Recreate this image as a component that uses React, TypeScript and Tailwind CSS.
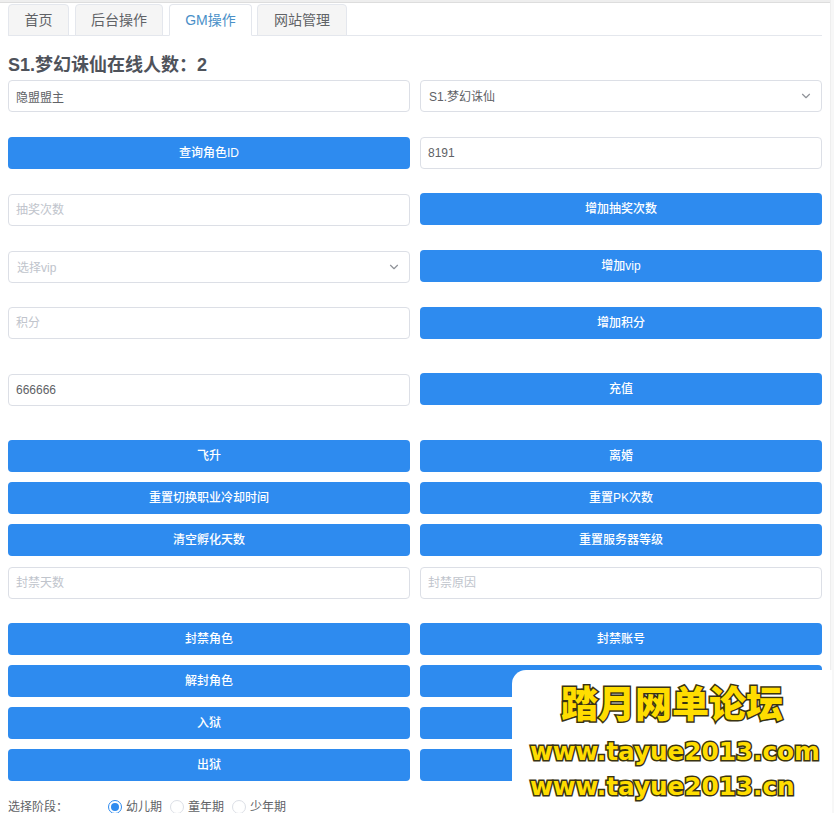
import { ChevronDown } from 'lucide-react';

const font = "[font-family:'Liberation_Sans','Noto_Sans_CJK_SC',sans-serif]";

function Field({ value, placeholder }: { value?: string; placeholder?: string }) {
  return (
    <input
      readOnly
      value={value}
      placeholder={placeholder}
      className="w-full h-8 rounded border border-[#dcdfe6] bg-white px-[7px] text-xs text-[#606266] outline-none placeholder:text-[#c0c4cc]"
    />
  );
}

function Picker({ value, placeholder }: { value?: string; placeholder?: string }) {
  return (
    <div className="w-full h-8 rounded border border-[#dcdfe6] bg-white pl-2 pr-2 flex items-center justify-between text-xs">
      <span className={`pt-px ${value ? 'text-[#606266]' : 'text-[#c0c4cc]'}`}>{value || placeholder}</span>
      <ChevronDown size={14} className="text-[#909399]" />
    </div>
  );
}

function Btn({ label }: { label?: string }) {
  return (
    <button className="w-full h-8 rounded bg-[#2e8bef] text-white text-xs font-medium flex items-center justify-center">
      {label}
    </button>
  );
}

function Radio({ label, checked }: { label: string; checked?: boolean }) {
  return (
    <span className="flex items-center gap-1">
      <span className={`w-[14px] h-[14px] rounded-full border flex items-center justify-center ${checked ? 'border-[#2e8bef]' : 'border-[#dcdfe6]'}`}>
        {checked && <span className="w-2 h-2 rounded-full bg-[#2e8bef]" />}
      </span>
      <span>{label}</span>
    </span>
  );
}

const tabs = [
  { label: '首页', w: 'w-[61px]' },
  { label: '后台操作', w: 'w-[88px]' },
  { label: 'GM操作', w: 'w-[83px] -mr-px', active: true },
  { label: '网站管理', w: 'w-[90px]' },
];

export default function App() {
  return (
    <div className={`relative h-[813px] overflow-hidden bg-[#f7f7f7] ${font}`}>
      <div className="mr-[3px] h-full bg-white border-r border-[#eeeeee]">
        <div className="h-[3px] bg-[#eeeeee] border-b border-[#dddddd]" />
        <div className="pl-2 pr-2 pt-px">
          {/* tabs */}
          <div className="h-[32px] flex gap-[6px] border-b border-[#e4e7ed]">
            {tabs.map(t => (
              <div
                key={t.label}
                className={`${t.w} h-[32px] rounded-t border border-[#e4e7ed] flex items-center justify-center text-sm ${
                  t.active ? 'bg-white border-b-white text-[#4a90c8]' : 'bg-[#f5f5f5] text-[#606266]'
                }`}
              >
                {t.label}
              </div>
            ))}
          </div>

          <h2 className="mt-[17px] h-[24px] leading-[24px] text-lg font-bold text-[#4f535b]">S1.梦幻诛仙在线人数：2</h2>

          <div className="mt-[3px] grid grid-cols-2 gap-x-[10px]">
            <Field value="隐盟盟主" />
            <Picker value="S1.梦幻诛仙" />
          </div>
          <div className="mt-[25px] grid grid-cols-2 gap-x-[10px]">
            <Btn label="查询角色ID" />
            <Field value="8191" />
          </div>
          <div className="mt-[24px] grid grid-cols-2 gap-x-[10px]">
            <div className="pt-px"><Field placeholder="抽奖次数" /></div>
            <Btn label="增加抽奖次数" />
          </div>
          <div className="mt-[24px] grid grid-cols-2 gap-x-[10px]">
            <div className="pt-px"><Picker placeholder="选择vip" /></div>
            <Btn label="增加vip" />
          </div>
          <div className="mt-[24px] grid grid-cols-2 gap-x-[10px]">
            <Field placeholder="积分" />
            <Btn label="增加积分" />
          </div>
          <div className="mt-[34px] grid grid-cols-2 gap-x-[10px]">
            <div className="pt-px"><Field value="666666" /></div>
            <Btn label="充值" />
          </div>

          <div className="mt-[34px] grid grid-cols-2 gap-x-[10px] gap-y-[10px]">
            <Btn label="飞升" />
            <Btn label="离婚" />
            <Btn label="重置切换职业冷却时间" />
            <Btn label="重置PK次数" />
            <Btn label="清空孵化天数" />
            <Btn label="重置服务器等级" />
          </div>
          <div className="mt-[11px] grid grid-cols-2 gap-x-[10px]">
            <Field placeholder="封禁天数" />
            <Field placeholder="封禁原因" />
          </div>
          <div className="mt-[24px] grid grid-cols-2 gap-x-[10px] gap-y-[10px]">
            <Btn label="封禁角色" />
            <Btn label="封禁账号" />
            <Btn label="解封角色" />
            <Btn />
            <Btn label="入狱" />
            <Btn />
            <Btn label="出狱" />
            <Btn />
          </div>

          <div className="mt-[18px] flex items-center text-xs text-[#606266]">
            <span className="w-[100px]">选择阶段：</span>
            <span className="flex gap-2">
              <Radio label="幼儿期" checked />
              <Radio label="童年期" />
              <Radio label="少年期" />
            </span>
          </div>
        </div>
      </div>

      {/* forum watermark pasted over the page */}
      <div className="absolute left-[512px] right-[2px] top-[670px] bottom-0 rounded-tl-[14px] bg-white">
        <div className="mt-[8px] ml-[49px] h-[48px] leading-[48px] text-[37px] font-black text-[#ffdd00] [-webkit-text-stroke:3px_#3a3410] [paint-order:stroke_fill] [font-family:'Noto_Sans_CJK_SC',sans-serif]">
          踏月网单论坛
        </div>
        <div className="mt-[10px] ml-[18px] h-[32px] leading-[32px] text-[24.7px] font-bold text-[#ffdd00] [-webkit-text-stroke:3px_#3a3410] [paint-order:stroke_fill] [font-family:'DejaVu_Sans',sans-serif] whitespace-nowrap">
          www.tayue2013.com
        </div>
        <div className="mt-[3px] ml-[18px] h-[32px] leading-[32px] text-[24.7px] font-bold text-[#ffdd00] [-webkit-text-stroke:3px_#3a3410] [paint-order:stroke_fill] [font-family:'DejaVu_Sans',sans-serif] whitespace-nowrap">
          www.tayue2013.cn
        </div>
      </div>
    </div>
  );
}
